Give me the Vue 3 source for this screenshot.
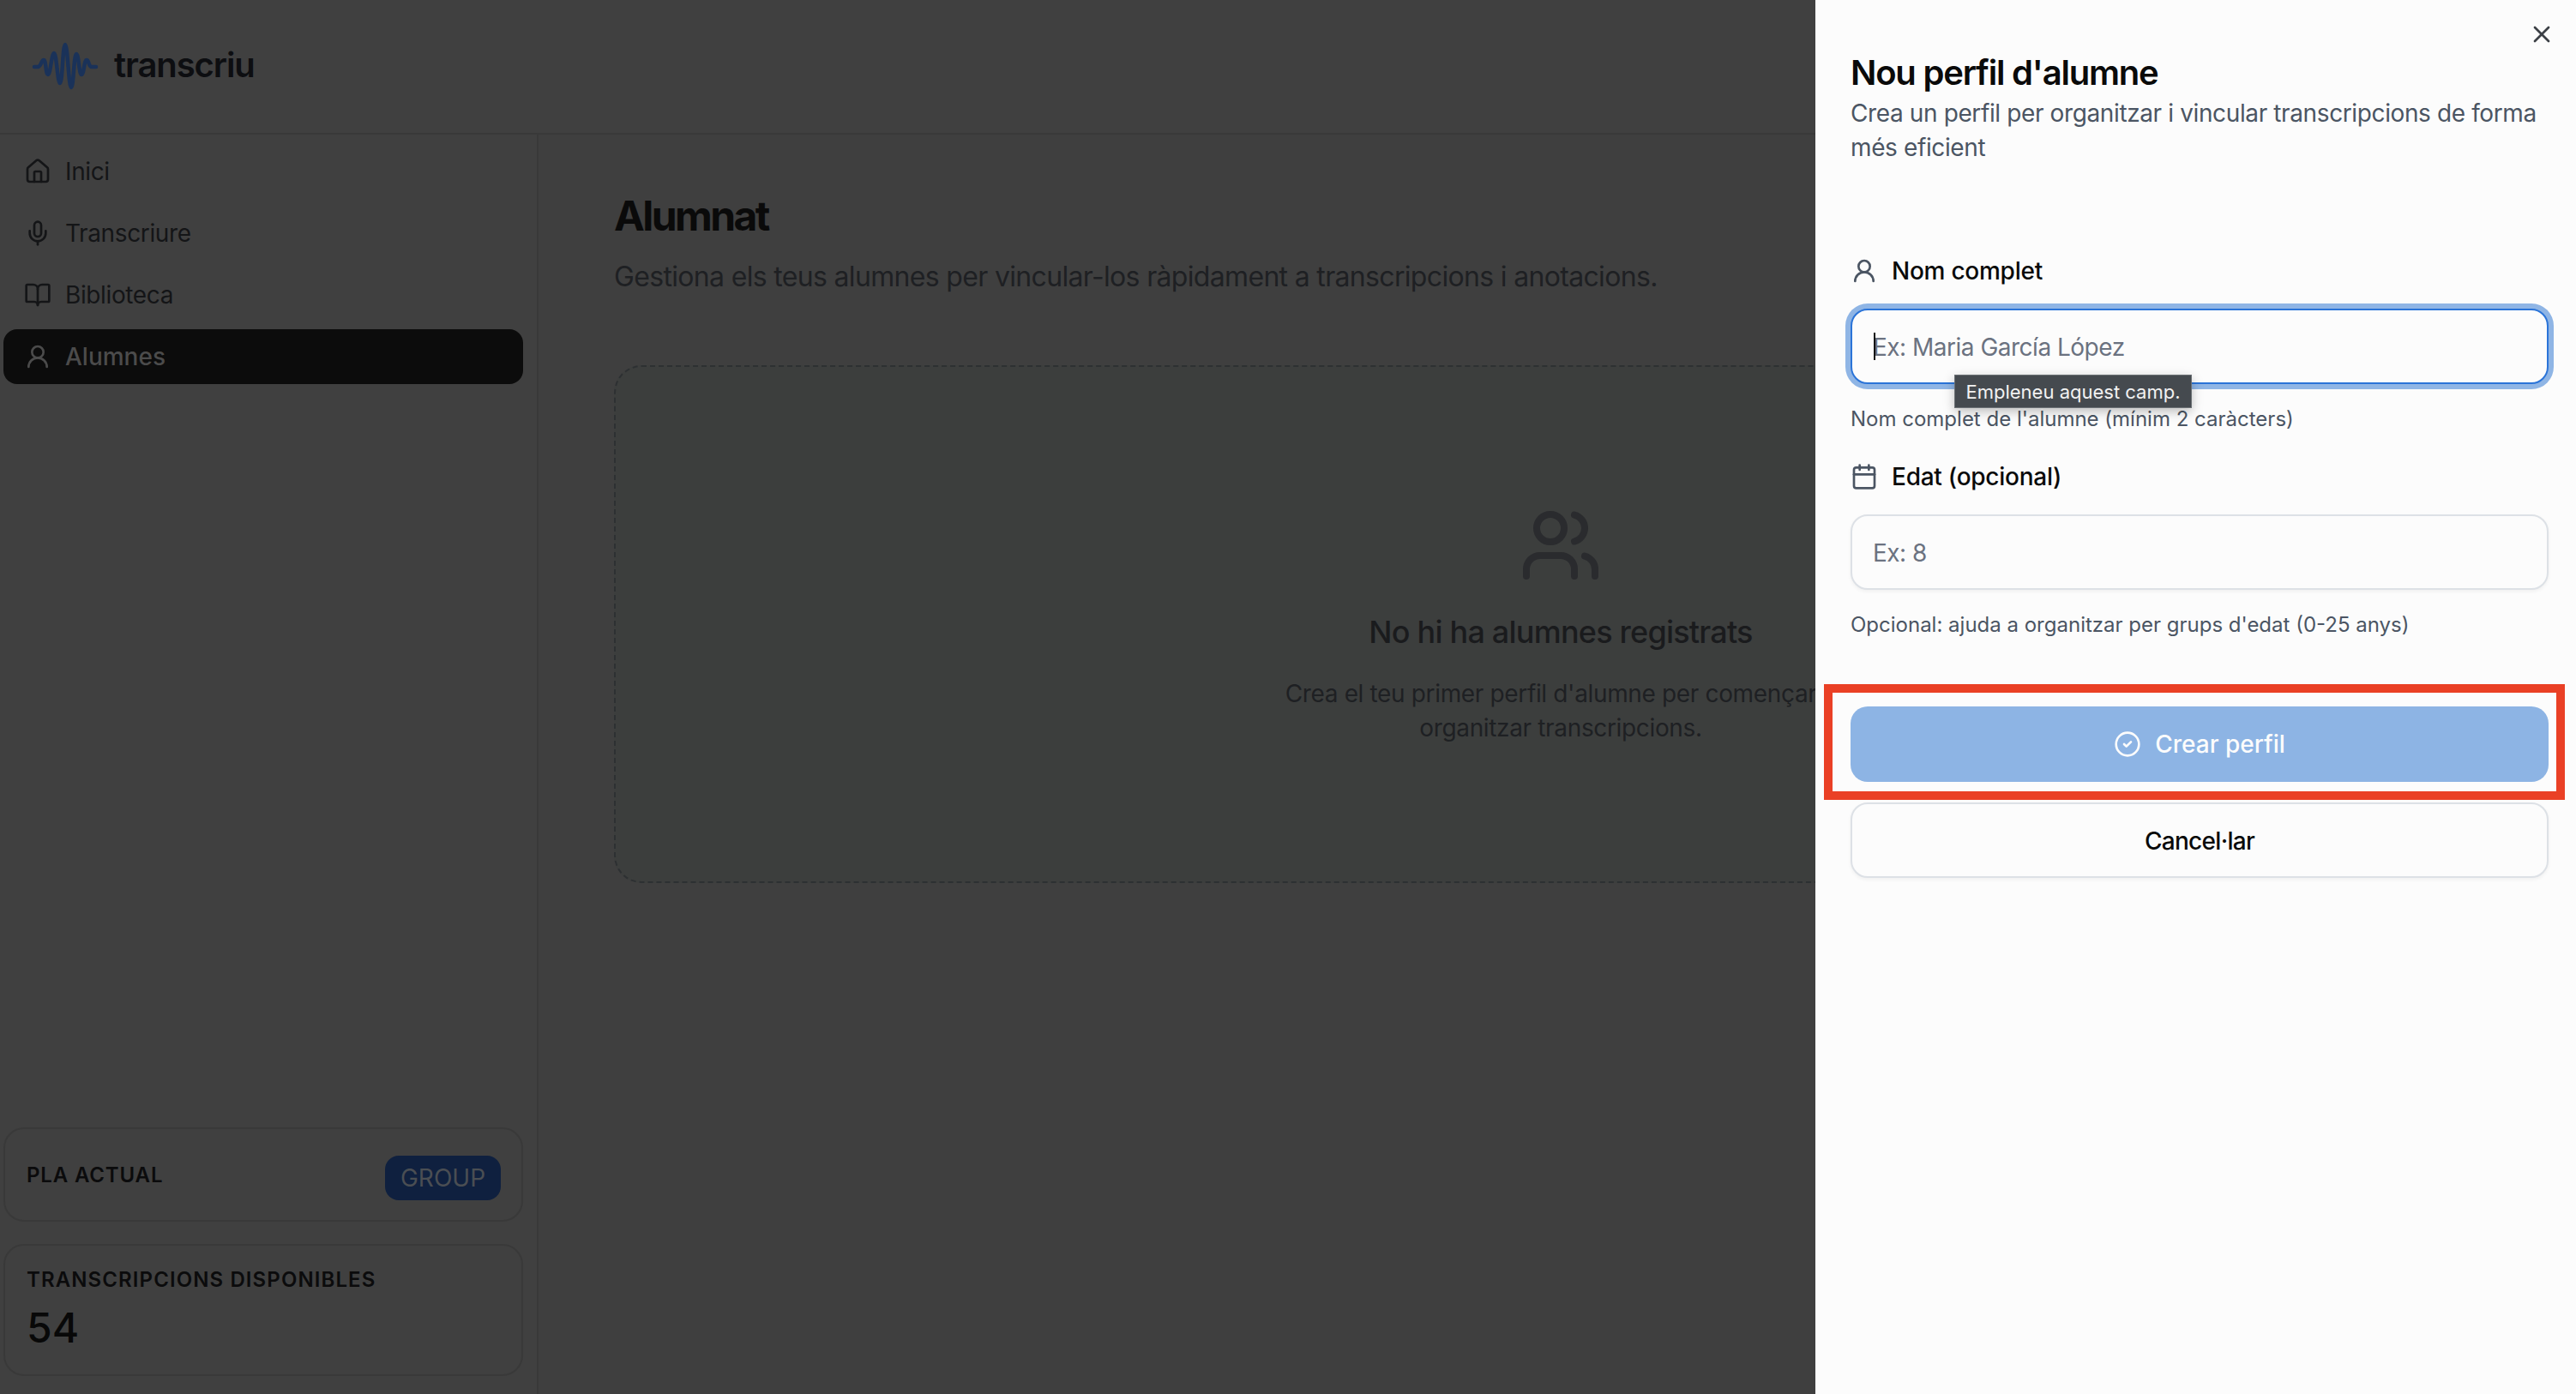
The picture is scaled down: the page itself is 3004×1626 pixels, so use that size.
<script setup>
const navItems = [
  {
    label: 'Inici',
    paths: [
      'M15 21v-8a1 1 0 0 0-1-1h-4a1 1 0 0 0-1 1v8',
      'M3 10a2 2 0 0 1 .709-1.528l7-5.999a2 2 0 0 1 2.582 0l7 5.999A2 2 0 0 1 21 10v9a2 2 0 0 1-2 2H5a2 2 0 0 1-2-2z'
    ]
  },
  {
    label: 'Transcriure',
    paths: [
      'M12 2a3 3 0 0 0-3 3v7a3 3 0 0 0 6 0V5a3 3 0 0 0-3-3Z',
      'M19 10v2a7 7 0 0 1-14 0v-2',
      'M12 19v3'
    ]
  },
  {
    label: 'Biblioteca',
    paths: [
      'M12 7v14',
      'M3 18a1 1 0 0 1-1-1V4a1 1 0 0 1 1-1h5a4 4 0 0 1 4 4 4 4 0 0 1 4-4h5a1 1 0 0 1 1 1v13a1 1 0 0 1-1 1h-6a3 3 0 0 0-3 3 3 3 0 0 0-3-3z'
    ]
  },
  {
    label: 'Alumnes',
    active: true,
    paths: ['M20 21a8 8 0 0 0-16 0', 'M17 8a5 5 0 1 1-10 0 5 5 0 0 1 10 0Z']
  }
]

const userPaths = navItems[3].paths
const calendarPaths = ['M8 2v4', 'M16 2v4', 'M5 4h14a2 2 0 0 1 2 2v14a2 2 0 0 1-2 2H5a2 2 0 0 1-2-2V6a2 2 0 0 1 2-2Z', 'M3 10h18']
</script>

<template>
  <div class="page">
    <header class="topbar">
      <svg class="logo-wave" width="84" height="60" viewBox="0 0 84 60" fill="none">
        <path d="M6 31 H10 C14 31 14 23 17 23 C20 23 19 40 22 40 C25 40 26 15 29 15 C32 15 33 50 36 50 C39 50 39 5 42 5 C45 5 46 55 49 55 C52 55 52 16 55 16 C58 16 58 40 61 40 C64 40 64 23 67 23 C70 23 69 31 73 31 H78" stroke="#1a3259" stroke-width="4.5" stroke-linecap="round" stroke-linejoin="round" />
      </svg>
      <span class="logo-text">transcriu</span>
    </header>

    <div class="body">
      <aside class="sidebar">
        <nav class="nav">
          <a v-for="item in navItems" :key="item.label" class="nav-item" :class="{ active: item.active }">
            <svg class="icon" viewBox="0 0 24 24">
              <path v-for="d in item.paths" :key="d" :d="d" />
            </svg>
            {{ item.label }}
          </a>
        </nav>

        <div class="cards">
          <div class="card plan">
            <span class="card-label">PLA ACTUAL</span>
            <span class="badge">GROUP</span>
          </div>
          <div class="card credits">
            <div class="card-label">TRANSCRIPCIONS DISPONIBLES</div>
            <div class="credits-num">54</div>
          </div>
        </div>
      </aside>

      <main class="main">
        <h1>Alumnat</h1>
        <p class="lead">Gestiona els teus alumnes per vincular-los ràpidament a transcripcions i anotacions.</p>

        <section class="empty">
          <svg class="empty-icon" viewBox="0 0 24 24">
            <path d="M16 21v-2a4 4 0 0 0-4-4H6a4 4 0 0 0-4 4v2" />
            <path d="M16 3.13a4 4 0 0 1 0 7.75" />
            <path d="M22 21v-2a4 4 0 0 0-3-3.87" />
            <circle cx="9" cy="7" r="4" />
          </svg>
          <h2>No hi ha alumnes registrats</h2>
          <p>Crea el teu primer perfil d'alumne per començar a organitzar transcripcions.</p>
        </section>
      </main>
    </div>

    <aside class="panel">
      <svg class="close" viewBox="0 0 24 24">
        <path d="M18 6 6 18" />
        <path d="m6 6 12 12" />
      </svg>

      <h2 class="panel-title">Nou perfil d'alumne</h2>
      <p class="panel-sub">Crea un perfil per organitzar i vincular transcripcions de forma més eficient</p>

      <form class="form" @submit.prevent>
        <label class="field-label">
          <svg class="icon" viewBox="0 0 24 24">
            <path v-for="d in userPaths" :key="d" :d="d" />
          </svg>
          Nom complet
        </label>
        <input class="field focused" type="text" placeholder="Ex: Maria García López" />
        <p class="help first-help">Nom complet de l'alumne (mínim 2 caràcters)</p>

        <label class="field-label second">
          <svg class="icon" viewBox="0 0 24 24">
            <path v-for="d in calendarPaths" :key="d" :d="d" />
          </svg>
          Edat (opcional)
        </label>
        <input class="field" type="text" placeholder="Ex: 8" />
        <p class="help second-help">Opcional: ajuda a organitzar per grups d'edat (0-25 anys)</p>

        <button class="btn-primary" type="submit">
          <svg class="icon" viewBox="0 0 24 24">
            <circle cx="12" cy="12" r="10" />
            <path d="m9 12 2 2 4-4" />
          </svg>
          Crear perfil
        </button>
        <button class="btn-secondary" type="button">Cancel·lar</button>
      </form>

      <span class="caret"></span>
      <div class="tooltip">Empleneu aquest camp.</div>
      <div class="highlight"></div>
    </aside>
  </div>
</template>

<style>
html, body {
  margin: 0;
  background: #404040;
}
</style>

<style scoped>
.page {
  position: relative;
  width: 3004px;
  height: 1626px;
  overflow: hidden;
  display: flex;
  flex-direction: column;
  background: #404040;
  font-family: Inter, "Liberation Sans", sans-serif;
}

.icon {
  width: 32px;
  height: 32px;
  flex-shrink: 0;
  fill: none;
  stroke: currentColor;
  stroke-width: 2;
  stroke-linecap: round;
  stroke-linejoin: round;
}

.topbar {
  height: 155px;
  flex-shrink: 0;
  display: flex;
  align-items: center;
  padding-left: 34px;
  border-bottom: 2px solid #393939;
}

.logo-wave {
  margin-top: -2px;
}

.logo-text {
  margin: -4px 0 0 15px;
  font-size: 40px;
  font-weight: 600;
  letter-spacing: -1.1px;
  color: #0d0e11;
}

.body {
  flex: 1;
  display: flex;
  min-height: 0;
}

.sidebar {
  width: 628px;
  box-sizing: border-box;
  flex-shrink: 0;
  display: flex;
  flex-direction: column;
  justify-content: space-between;
  padding: 11px 16px 21px 4px;
  border-right: 2px solid #393939;
}

.nav {
  display: flex;
  flex-direction: column;
  gap: 8px;
}

.nav-item {
  height: 64px;
  display: flex;
  align-items: center;
  gap: 16px;
  padding-left: 24px;
  border-radius: 16px;
  font-size: 28px;
  letter-spacing: -0.38px;
  color: #141517;
}

.nav-item.active {
  background: #0c0c0c;
  color: #4b4b4b;
  font-weight: 500;
  letter-spacing: 0;
}

.cards {
  display: flex;
  flex-direction: column;
  gap: 26px;
}

.card {
  box-sizing: border-box;
  border: 2px solid #393939;
  border-radius: 24px;
  padding: 0 24px 0 25px;
}

.plan {
  height: 110px;
  display: flex;
  align-items: center;
  justify-content: space-between;
}

.plan .card-label {
  margin-top: 2px;
  letter-spacing: 0.85px;
}

.credits {
  height: 154px;
  padding-top: 24px;
}

.card-label {
  font-size: 24px;
  line-height: 32px;
  font-weight: 600;
  letter-spacing: 1.1px;
  color: #0b0b0c;
}

.badge {
  margin-top: 8px;
  width: 135px;
  height: 52px;
  display: flex;
  align-items: center;
  justify-content: center;
  border-radius: 16px;
  background: #0f203f;
  color: #4a4e53;
  font-size: 28px;
}

.credits-num {
  margin-top: 12px;
  font-size: 48px;
  line-height: 56px;
  font-weight: 500;
  color: #080808;
}

.main {
  flex: 1;
  min-width: 0;
  padding: 67px 80px 0 88px;
  background: #3f3f3f;
}

h1 {
  margin: 0;
  font-size: 48px;
  line-height: 56px;
  font-weight: 700;
  letter-spacing: -2.6px;
  color: #0a0a0a;
}

.lead {
  margin: 19px 0 0;
  font-size: 32px;
  line-height: 48px;
  letter-spacing: -0.67px;
  color: #1e2023;
}

.empty {
  margin-top: 79px;
  height: 604px;
  box-sizing: border-box;
  display: flex;
  flex-direction: column;
  align-items: center;
  padding-top: 160px;
  border: 2px dashed #2d3032;
  border-radius: 32px;
  background: #3c3e3d;
  text-align: center;
}

.empty-icon {
  width: 96px;
  height: 96px;
  fill: none;
  stroke: #2a2b2e;
  stroke-width: 2;
  stroke-linecap: round;
  stroke-linejoin: round;
}

.empty h2 {
  margin: 29px 0 0;
  font-size: 36px;
  line-height: 48px;
  font-weight: 500;
  letter-spacing: -0.78px;
  color: #1a1b1d;
}

.empty p {
  margin: 28px 0 0;
  max-width: 768px;
  font-size: 28px;
  line-height: 40px;
  letter-spacing: -0.35px;
  color: #1e2023;
}

.panel {
  position: absolute;
  top: 0;
  right: 0;
  bottom: 0;
  width: 887px;
  box-sizing: border-box;
  padding: 61px 32px 0 41px;
  background: #fcfcfc;
}

.close {
  position: absolute;
  top: 24px;
  right: 24px;
  width: 32px;
  height: 32px;
  fill: none;
  stroke: #3c4046;
  stroke-width: 2;
  stroke-linecap: round;
  stroke-linejoin: round;
}

.panel-title {
  margin: 0;
  font-size: 40px;
  line-height: 48px;
  font-weight: 600;
  letter-spacing: -1.2px;
  color: #0a0a0a;
}

.panel-sub {
  margin: 3px 0 0;
  font-size: 28px;
  line-height: 40px;
  letter-spacing: -0.38px;
  color: #4b5563;
}

.form {
  display: flex;
  flex-direction: column;
  margin-top: 104px;
}

.field-label {
  height: 40px;
  display: flex;
  align-items: center;
  gap: 16px;
  font-size: 28px;
  font-weight: 500;
  letter-spacing: -0.25px;
  color: #0a0a0a;
}

.field-label .icon {
  color: #4b5563;
}

.field-label.second {
  margin-top: 31px;
}

.field {
  box-sizing: border-box;
  width: 100%;
  height: 88px;
  margin-top: 24px;
  padding: 2px 24px 0;
  border: 2px solid #dde1e6;
  border-radius: 20px;
  outline: none;
  background: #fcfcfc;
  box-shadow: 0 2px 4px rgba(0, 0, 0, 0.05);
  font-family: inherit;
  font-size: 28px;
  letter-spacing: -0.5px;
}

.field::placeholder {
  color: #6b7280;
  opacity: 1;
}

.field.focused {
  border-color: #2b74d8;
  box-shadow: 0 0 0 6px #8fb5e5;
}

.help {
  margin: 0;
  font-size: 24px;
  line-height: 32px;
  color: #4b5563;
}

.first-help {
  margin-top: 25px;
}

.second-help {
  margin-top: 25px;
}

.btn-primary,
.btn-secondary {
  box-sizing: border-box;
  width: 100%;
  height: 88px;
  border-radius: 20px;
  font-family: inherit;
  font-size: 28px;
  font-weight: 500;
}

.btn-primary {
  margin-top: 79px;
  display: flex;
  align-items: center;
  justify-content: center;
  gap: 16px;
  border: none;
  background: #8db4e4;
  color: #fcfcfc;
}

.btn-secondary {
  margin-top: 24px;
  padding-top: 2px;
  border: 2px solid #dde1e6;
  background: #fcfcfc;
  box-shadow: 0 2px 4px rgba(0, 0, 0, 0.05);
  color: #0a0a0a;
  letter-spacing: -0.7px;
}

.caret {
  position: absolute;
  left: 68px;
  top: 388px;
  width: 2px;
  height: 32px;
  background: #111;
}

.tooltip {
  position: absolute;
  left: 162px;
  top: 437px;
  width: 277px;
  height: 39px;
  box-sizing: border-box;
  display: flex;
  align-items: center;
  justify-content: center;
  border: 1px solid #6b7074;
  background: #454a4f;
  box-shadow: 0 4px 12px rgba(0, 0, 0, 0.25);
  color: #f2f2f2;
  font-size: 22px;
}

.highlight {
  position: absolute;
  left: 10px;
  top: 798px;
  width: 864px;
  height: 135px;
  box-sizing: border-box;
  border: 10px solid #ea4025;
}
</style>
